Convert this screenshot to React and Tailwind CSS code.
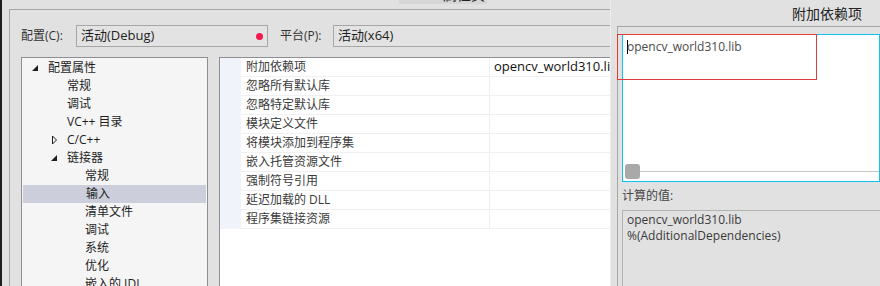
import React from 'react';

const FONT = { fontFamily: '"Open Sans", "Noto Sans CJK SC", sans-serif' };

const treeItems = [
    { text: '配置属性', pad: 'pl-[10px]', arrow: 'open' },
    { text: '常规', pad: 'pl-[29px]' },
    { text: '调试', pad: 'pl-[29px]' },
    { text: 'VC++ 目录', pad: 'pl-[29px]' },
    { text: 'C/C++', pad: 'pl-[29px]', arrow: 'closed' },
    { text: '链接器', pad: 'pl-[29px]', arrow: 'open' },
    { text: '常规', pad: 'pl-[47px]' },
    { text: '输入', pad: 'pl-[47px]', selected: true },
    { text: '清单文件', pad: 'pl-[47px]' },
    { text: '调试', pad: 'pl-[47px]' },
    { text: '系统', pad: 'pl-[47px]' },
    { text: '优化', pad: 'pl-[47px]' },
    { text: '嵌入的 IDL', pad: 'pl-[47px]' },
];

const props = [
    { name: '附加依赖项', value: 'opencv_world310.lib' },
    { name: '忽略所有默认库' },
    { name: '忽略特定默认库' },
    { name: '模块定义文件' },
    { name: '将模块添加到程序集' },
    { name: '嵌入托管资源文件' },
    { name: '强制符号引用' },
    { name: '延迟加载的 DLL' },
    { name: '程序集链接资源' },
];

const Arrow = ({ type }) => {
    if (type === 'open') {
        return (
            <svg width="16" height="8" viewBox="0 0 16 8" className="shrink-0">
                <polygon points="6,1 6,7 0,7" fill="#1e1e1e" />
            </svg>
        );
    }
    if (type === 'closed') {
        return (
            <svg width="16" height="10" viewBox="0 0 16 10" className="shrink-0">
                <polygon points="1.5,1 5.5,5 1.5,9" fill="none" stroke="#1e1e1e" strokeWidth="1" />
            </svg>
        );
    }
    return <div className="w-[16px] shrink-0" />;
};

export default function App() {
    return (
        <div className="w-[880px] h-[286px] overflow-hidden bg-[#e1e1e1] flex relative text-[12px]" style={FONT}>
            <div className="w-[2px] h-full bg-[#1e1e1e] shrink-0" />

            {/* main dialog */}
            <div className="w-[608px] h-full flex flex-col overflow-hidden shrink-0">
                <div className="h-[9px] shrink-0">
                    <div className="ml-[397px] w-[88px] h-[4px] bg-[#d6d6d6] overflow-hidden flex justify-end pr-[2px]">
                        <span className="text-[14px] leading-[14px] -mt-[12px] text-[#222]">属性页</span>
                    </div>
                </div>
                <div className="ml-[7px] flex-1 border-t border-l border-[#a6a6a6] flex flex-col">
                    <div className="flex items-center pt-[15px] h-[37px] shrink-0 text-[#333]">
                        <span className="ml-[11px] w-[55px] shrink-0">配置(C):</span>
                        <div className="w-[192px] shrink-0 h-[22px] border border-[#a6a6a6] bg-[#e3e3e3] flex items-center pl-[4px] pr-[4px] text-[#1e1e1e] text-[13px]">
                            <span className="flex-1">活动(Debug)</span>
                            <span className="w-[7px] h-[7px] rounded-full bg-[#ef1a4f]" />
                        </div>
                        <span className="ml-[12px] w-[53px] shrink-0">平台(P):</span>
                        <div className="w-[280px] shrink-0 h-[22px] border border-[#a6a6a6] bg-[#e3e3e3] flex items-center pl-[4px] text-[#1e1e1e] text-[13px]">
                            活动(x64)
                        </div>
                    </div>

                    <div className="flex mt-[10px] flex-1">
                        {/* tree */}
                        <div className="ml-[11px] w-[187px] shrink-0 h-[240px] border border-[#8f8f93] bg-[#f5f5f5] pt-[1px] text-[#1e1e1e]">
                            {treeItems.map((item, i) => (
                                <div
                                    key={i}
                                    className={`h-[18px] flex items-center ${item.pad} ${item.selected ? 'bg-[#cccedb] mx-[1px]' : ''}`}
                                >
                                    <Arrow type={item.arrow} />
                                    <span className="leading-[18px] whitespace-nowrap">{item.text}</span>
                                </div>
                            ))}
                        </div>

                        {/* property grid */}
                        <div className="ml-[11px] w-[420px] shrink-0 h-[240px] border border-[#8f8f93] bg-white flex">
                            <div className="w-[21px] h-[171px] bg-[#f0f4fa] shrink-0" />
                            <div className="flex-1">
                                {props.map((p, i) => (
                                    <div key={i} className="h-[19px] flex border-b border-[#f0f0f0]">
                                        <div className="w-[249px] shrink-0 border-r border-[#f0f0f0] pl-[5px] flex items-center text-[#3a3a3a]">
                                            {p.name}
                                        </div>
                                        <div className="flex-1 pl-[4px] flex items-center text-[13px] text-[#111] whitespace-nowrap">
                                            {p.value}
                                        </div>
                                    </div>
                                ))}
                            </div>
                        </div>
                    </div>
                </div>
            </div>

            {/* right dialog */}
            <div className="w-[270px] h-full border-l border-[#ececec] flex flex-col relative shrink-0">
                <div className="h-[26px] shrink-0 flex justify-end items-center pr-[18px] text-[14px] text-[#222]">
                    附加依赖项
                </div>
                <div className="ml-[6px] flex-1 border-t border-l border-[#a6a6a6] flex flex-col pl-[4px] pt-[7px]">
                    <div className="h-[148px] border border-[#12c2f5] bg-white flex flex-col relative">
                        <div className="flex items-center pl-[4px] pt-[3px] text-[#4a4a4a]">
                            <span className="w-[1px] h-[14px] bg-black -mr-[1px]" />
                            <span>opencv_world310.lib</span>
                        </div>
                        <div className="mt-auto mb-[2px] flex items-center pl-[2px]">
                            <div className="w-[15px] h-[15px] rounded-[3px] bg-[#a9a9a9]" />
                            <div className="flex-1 h-[1px] bg-[#c6c6c6]" />
                        </div>
                    </div>
                    <div className="mt-[4px] h-[20px] flex items-center text-[#444]">计算的值:</div>
                    <div className="mt-[4px] flex-1 border-t border-l border-[#b3b3b3] bg-[#e1e1e1] pl-[4px] pt-[1px] text-[#3a3a3a] leading-[16px]">
                        <div>opencv_world310.lib</div>
                        <div>%(AdditionalDependencies)</div>
                    </div>
                </div>
                {/* red annotation box */}
                <div className="absolute left-[6px] top-[34px] w-[200px] h-[46px] border border-[#e53a3a]" />
            </div>
        </div>
    );
}
